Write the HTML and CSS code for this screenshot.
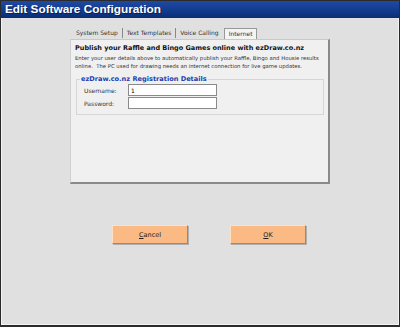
FILE: index.html
```html
<!DOCTYPE html>
<html lang="en">
<head>
  <meta charset="UTF-8">
  <meta name="viewport" content="width=device-width, initial-scale=1.0">
  <title>Edit Software Configuration</title>
  <link rel="stylesheet" href="styles.css">
</head>
<body>
  <div class="window">
    <div class="title-bar">Edit Software Configuration</div>

    <div class="content">
      <div class="tabs-box">
        <!-- 选项卡 -->
        <div class="tabs">
          <span class="tab">System Setup</span>
          <span class="tab">Text Templates</span>
          <span class="tab">Voice Calling</span>
          <span class="tab active">Internet</span>
        </div>

        <div class="panel">
          <div class="heading">Publish your Raffle and Bingo Games online with ezDraw.co.nz</div>
          <div class="desc">Enter your user details above to automatically publish your Raffle, Bingo and Housie results online.&nbsp; The PC used for drawing needs an internet connection for live game updates.</div>

          <fieldset class="details">
            <legend>ezDraw.co.nz Registration Details</legend>
            <div class="row">
              <label>Username:</label>
              <input class="field" type="text" value="1">
            </div>
            <div class="row">
              <label>Password:</label>
              <input class="field" type="password">
            </div>
          </fieldset>
        </div>
      </div>

      <!-- 底部按钮 -->
      <div class="buttons">
        <button class="btn"><u>C</u>ancel</button>
        <button class="btn"><u>O</u>K</button>
      </div>
    </div>
  </div>
</body>
</html>
```

FILE: styles.css
```css
body {
  margin: 0;
  font-family: "DejaVu Sans", Verdana, sans-serif;
}

.window {
  width: 400px;
  height: 327px;
  box-sizing: border-box;
  border: 1px solid #2b2b2b;
  border-bottom-width: 2px;
  background-color: #e0e0e0;
  display: flex;
  flex-direction: column;
  box-shadow: inset 1px 0 0 #f2f2f2, inset -1px 0 0 #f2f2f2, inset 0 -1px 0 #f2f2f2;
}

.title-bar {
  height: 17px;
  line-height: 17px;
  padding-left: 4px;
  font-family: "Liberation Sans", Arial, sans-serif;
  font-weight: bold;
  font-size: 11.8px;
  color: #fff;
  text-shadow: 1px 1px 0 #0a1f50;
  background: linear-gradient(#1f4aa3, #113a8c 60%, #0a2c74);
}

.content {
  padding: 9px 0 0 69px;
}

/* 选项卡 */
.tabs-box {
  width: 260px;
}

.tabs {
  display: flex;
  align-items: flex-end;
  height: 12px;
  padding-left: 2px;
  font-size: 6px;
  color: #333;
}

.tab {
  padding: 0 4px;
  line-height: 10px;
  border-right: 1px solid #888;
  margin-bottom: 1px;
}

.tab:nth-child(3) {
  border-right: none;
}

.active {
  margin-left: 1px;
  margin-bottom: 0;
  line-height: 10px;
  padding: 0 4px;
  border: 1px solid #999;
  border-bottom: none;
  background-color: #f4f4f4;
}

.panel {
  height: 145px;
  box-sizing: border-box;
  padding: 4px 4px 0 4px;
  background-color: #f0f0f0;
  border-top: 1px solid #c8c8c8;
  border-left: 1px solid #d0d0d0;
  border-right: 2px solid #8a8a8a;
  border-bottom: 2px solid #8a8a8a;
}

.heading {
  font-weight: bold;
  font-size: 6.5px;
  line-height: 9px;
  color: #111;
}

.desc {
  font-size: 5.3px;
  line-height: 8px;
  color: #333;
  margin-top: 1px;
}

.details {
  margin: 5px 0 0 1px;
  padding: 1px 0 4px 3px;
  border: 1px solid #d6d6d6;
}

.details legend {
  padding: 0 1px;
  font-weight: bold;
  font-size: 6.6px;
  color: #2040b0;
}

.row {
  display: flex;
  align-items: center;
  height: 12px;
  margin-bottom: 1px;
  padding-left: 4px;
}

.row label {
  width: 44px;
  font-size: 6px;
  color: #333;
}

.field {
  width: 89px;
  height: 12px;
  box-sizing: border-box;
  margin: 0;
  padding: 0 2px;
  border: 1px solid #8a8a8a;
  background-color: #fff;
  font-size: 6px;
  font-family: "DejaVu Sans", sans-serif;
}

/* 底部按钮 */
.buttons {
  display: flex;
  gap: 42px;
  padding: 41px 0 0 42px;
}

.btn {
  width: 76px;
  height: 19px;
  padding: 0;
  font-family: "DejaVu Sans", sans-serif;
  font-size: 6.5px;
  color: #222;
  background-color: #fbb983;
  border: 1px solid;
  border-color: #fde0c6 #8c8c8c #8c8c8c #fde0c6;
  box-shadow: 1px 1px 0 #b0b0b0;
}
```
